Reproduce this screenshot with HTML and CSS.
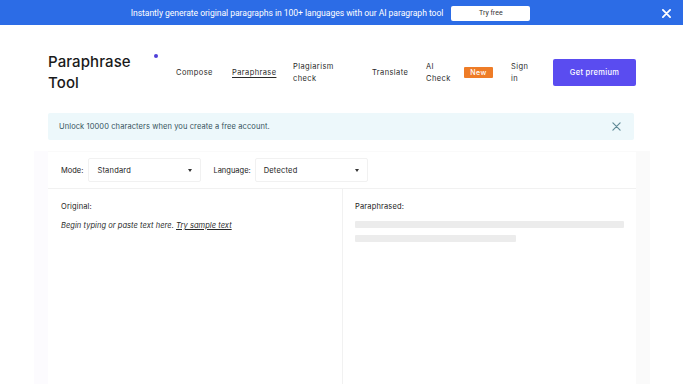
FILE: index.html
```html
<!DOCTYPE html>
<html lang="en">
<head>
<meta charset="utf-8">
<title>Paraphrase Tool</title>
<link rel="stylesheet" href="styles.css">
</head>
<body>
<div class="banner">
  <div class="banner-spacer"></div>
  <div class="banner-main">
    <span class="banner-text">Instantly generate original paragraphs in 100+ languages with our AI paragraph tool</span>
    <button class="try-btn">Try free</button>
  </div>
  <div class="banner-close">
    <svg width="9" height="9" viewBox="0 0 10 10"><path d="M1 1L9 9M9 1L1 9" stroke="#fff" stroke-width="2" stroke-linecap="round"/></svg>
  </div>
</div>

<header class="header">
  <div class="logo">
    <span class="logo-text">Paraphrase<br>Tool</span>
    <span class="logo-dot"></span>
  </div>
  <nav class="nav">
    <a class="nav-item w-compose">Compose</a>
    <a class="nav-item active w-para">Paraphrase</a>
    <a class="nav-item w-plag">Plagiarism<br>check</a>
    <a class="nav-item w-trans">Translate</a>
    <a class="nav-item w-ai">AI<br>Check</a>
    <span class="badge">New</span>
    <a class="nav-item w-sign">Sign<br>in</a>
    <button class="premium">Get premium</button>
  </nav>
</header>

<div class="notice">
  <span>Unlock 10000 characters when you create a free account.</span>
  <svg width="9" height="9" viewBox="0 0 10 10"><path d="M1 1L9 9M9 1L1 9" stroke="#5f8a96" stroke-width="1.3" stroke-linecap="round"/></svg>
</div>

<main class="card">
  <div class="toolbar">
    <span class="label">Mode:</span>
    <div class="select"><span>Standard</span><span class="caret"></span></div>
    <span class="label lang">Language:</span>
    <div class="select"><span>Detected</span><span class="caret"></span></div>
  </div>
  <div class="panes">
    <section class="pane">
      <div class="pane-title">Original:</div>
      <div class="placeholder">Begin typing or paste text here. <u>Try sample text</u></div>
    </section>
    <section class="pane right">
      <div class="pane-title">Paraphrased:</div>
      <div class="skeleton full"></div>
      <div class="skeleton part"></div>
    </section>
  </div>
</main>
</body>
</html>
```

FILE: styles.css
```css
* { box-sizing: border-box; }
html, body { margin: 0; padding: 0; background: #fff; }
body { font-family: Inter, "Noto Sans", sans-serif; color: #1f1f1f; width: 683px; height: 384px; overflow: hidden; }

.banner {
  height: 25px;
  background: #2c6ce6;
  display: grid;
  grid-template-columns: 1fr auto 1fr;
  align-items: center;
}
.banner-main { display: flex; align-items: center; gap: 8px; margin-right: 22px; }
.banner-text { font-family: Roboto, sans-serif; font-size: 8.6px; color: #fff; letter-spacing: -0.05px; }
.try-btn {
  font-family: Roboto, sans-serif;
  font-size: 7px;
  color: #333;
  background: #fff;
  border: none;
  border-radius: 2px;
  width: 79px;
  height: 15px;
  padding: 0;
  margin-top: 1px;
}
.banner-close { justify-self: end; margin-right: 12px; display: flex; margin-top: 1px; }

.header {
  display: flex;
  align-items: flex-start;
  padding: 26px 0 0 48px;
  height: 77px;
}
.logo { position: relative; width: 128px; }
.logo-text { font-size: 15px; font-weight: 500; line-height: 21px; color: #1a1a1a; letter-spacing: 0.1px; display: block; }
.logo-dot { position: absolute; left: 106px; top: 3px; width: 4px; height: 4px; border-radius: 50%; background: #4f3fd8; }

.nav { display: flex; align-items: center; height: 33px; margin-top: 5px; }
.nav-item { font-size: 7.5px; line-height: 12px; color: #2a2a2a; letter-spacing: 0.4px; }
.w-compose { width: 56px; }
.w-para { width: 61px; }
.w-plag { width: 79px; }
.w-trans { width: 54px; }
.w-ai { width: 38px; }
.w-sign { width: 42px; }
.active { text-decoration: underline; text-underline-offset: 2px; }
.badge {
  width: 29px; height: 11px; margin-right: 18px; margin-top: -1px;
  background: #ee7c27; color: #fff; border-radius: 1px;
  font-size: 7px; letter-spacing: 0.4px; font-weight: 500;
  display: flex; align-items: center; justify-content: center;
}
.premium {
  width: 83px; height: 27px; border: none; border-radius: 2px;
  background: #5a4cf0; color: #fff; font-family: Inter, sans-serif;
  font-size: 7.5px; font-weight: 500; letter-spacing: 0.3px; padding: 0;
}

.notice {
  margin: 11px 49px 0 48px;
  height: 27px;
  background: #edf8fb;
  border-radius: 2px;
  display: flex; align-items: center; justify-content: space-between;
  padding: 0 13px 0 11px;
  font-size: 7.5px; color: #34525c; letter-spacing: 0.1px;
}

.card {
  margin: 11px 47px 0 48px;
  background: #fff;
  box-shadow: -14px 0 0 #fcfbfe, 14px 0 0 #fafafa;
  height: 234px;
}
.toolbar {
  height: 38px;
  display: flex; align-items: center;
  padding: 0 13px;
  border-bottom: 1px solid #f1f1f1;
  border-top: 1px solid #fafafa;
}
.label { font-size: 7.5px; color: #222; letter-spacing: 0; margin-right: 5px; }
.label.lang { margin-left: 12px; margin-right: 4px; }
.select {
  width: 113px; height: 24px;
  border: 1px solid #f1f1f1; border-radius: 2px;
  display: flex; align-items: center; justify-content: space-between;
  padding: 0 8px 0 8px;
  font-size: 7.5px; color: #222; letter-spacing: 0.2px;
}
.caret { width: 0; height: 0; border-left: 2.5px solid transparent; border-right: 2.5px solid transparent; border-top: 3px solid #333; }

.panes { display: grid; grid-template-columns: 294px 1fr; height: 195px; }
.pane { padding: 13px 13px; }
.pane.right { border-left: 1px solid #f1f1f1; padding-left: 12px; }
.pane-title { font-size: 7.5px; color: #222; letter-spacing: 0.15px; line-height: 10px; margin-bottom: 9px; }
.placeholder { font-size: 7.5px; font-style: italic; color: #2a2a2a; letter-spacing: 0.05px; }
.placeholder u { text-underline-offset: 1px; }
.skeleton { height: 7px; background: #ececec; border-radius: 1px; }
.skeleton.full { width: 269px; margin-top: 6px; }
.skeleton.part { width: 161px; margin-top: 7px; }
```
